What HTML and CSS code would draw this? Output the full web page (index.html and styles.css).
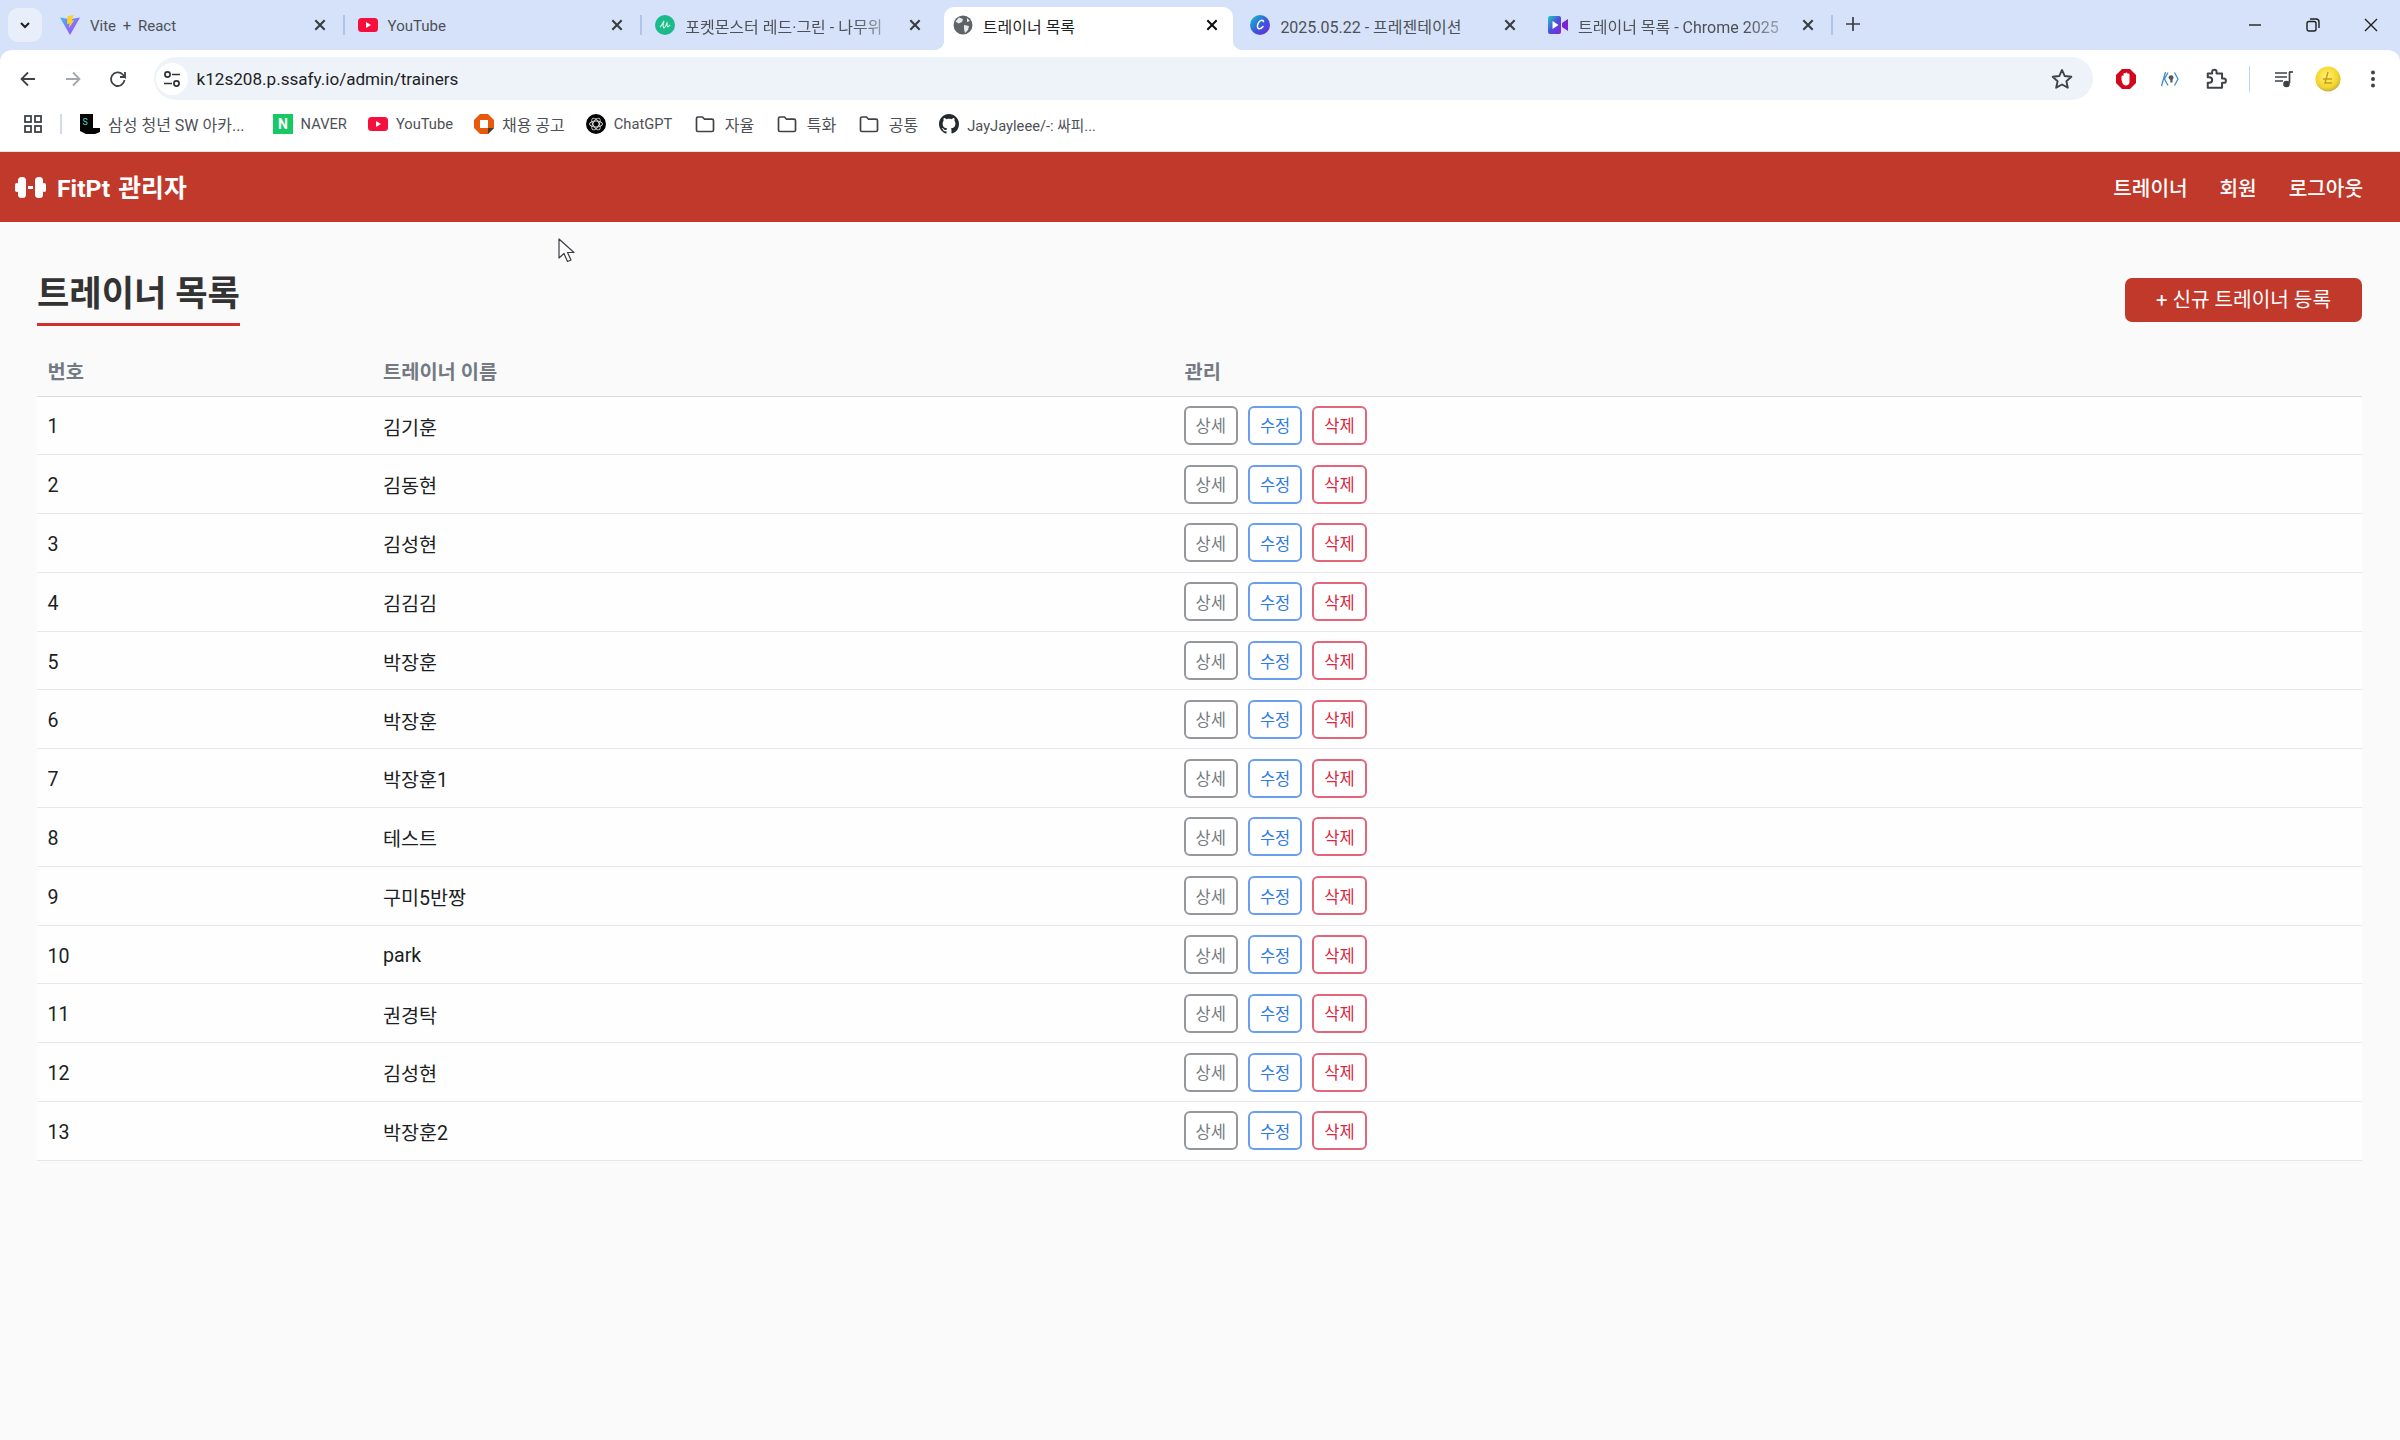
FILE: index.html
```html
<!DOCTYPE html>
<html lang="ko">
<head>
<meta charset="utf-8">
<title>트레이너 목록</title>
<link rel="stylesheet" href="styles.css">
</head>
<body>
<svg class="sprite" aria-hidden="true">
  <defs>
    <linearGradient id="g-vite" x1="0" y1="0" x2="1" y2="1"><stop offset="0" stop-color="#41b6ff"/><stop offset="1" stop-color="#bd34fe"/></linearGradient>
    <linearGradient id="g-canva" x1="0" y1="0" x2="1" y2="1"><stop offset="0" stop-color="#12c6c6"/><stop offset=".55" stop-color="#3b56e0"/><stop offset="1" stop-color="#7a1fd6"/></linearGradient>
    <linearGradient id="g-clip" x1="0" y1="0" x2="1" y2="1"><stop offset="0" stop-color="#1fd0b5"/><stop offset=".5" stop-color="#4b4fe0"/><stop offset="1" stop-color="#8a22d0"/></linearGradient>
    <radialGradient id="g-coin" cx=".45" cy=".4" r=".65"><stop offset="0" stop-color="#fff27a"/><stop offset=".7" stop-color="#f3d528"/><stop offset="1" stop-color="#b7a24a"/></radialGradient>
    <symbol id="i-yt" viewBox="0 0 20 14"><rect width="20" height="14" rx="3.5" fill="#f50f3c"/><path d="M8 4l5 3-5 3z" fill="#fff"/></symbol>
    <symbol id="i-folder" viewBox="0 0 20 18"><path d="M1.5 3.5a1.5 1.5 0 0 1 1.5-1.5h4.5l2 2.2H17a1.5 1.5 0 0 1 1.5 1.5v9.3a1.5 1.5 0 0 1-1.5 1.5H3a1.5 1.5 0 0 1-1.5-1.5z" fill="none" stroke="#3f4347" stroke-width="1.7"/></symbol>
    <symbol id="i-close" viewBox="0 0 12 12"><path d="M2 2l8 8M10 2l-8 8" fill="none" stroke="currentColor" stroke-width="1.8"/></symbol>
  </defs>
</svg>

<div class="browser">
  <div class="tabstrip">
    <div class="tab-menu"><svg class="ico-12" viewBox="0 0 12 12"><path d="M2 4l4 4 4-4" fill="none" stroke="#1f1f1f" stroke-width="2"/></svg></div>

    <div class="tab tab-sep">
      <svg class="favicon" viewBox="0 0 20 20"><path d="M0 2.5l10 1.7 10-1.7-10 17.5z" fill="url(#g-vite)"/><path d="M13.5 0L7.5 1.2 7 9l2.5-.5-.6 4.5 5.5-8-2.6.5z" fill="#ffd028"/></svg>
      <span class="tab-title tab-title-latin">Vite + React</span>
      <svg class="tab-close"><use href="#i-close"/></svg>
    </div>
    <div class="tab tab-sep">
      <svg class="favicon"><use href="#i-yt"/></svg>
      <span class="tab-title tab-title-latin">YouTube</span>
      <svg class="tab-close"><use href="#i-close"/></svg>
    </div>
    <div class="tab">
      <svg class="favicon" viewBox="0 0 20 20"><circle cx="10" cy="10" r="10" fill="#1cb98a"/><path d="M5 12c2-1 3-5 4-6-1 3-1 6 0 7 2-1 2-4 3-5 0 2 0 4 1 4l2-2" fill="none" stroke="#c9f5e4" stroke-width="1.2"/></svg>
      <span class="tab-title tab-title-fade">포켓몬스터 레드·그린 - 나무위</span>
      <svg class="tab-close"><use href="#i-close"/></svg>
    </div>
    <div class="tab tab-active">
      <svg class="favicon" viewBox="0 0 20 20"><circle cx="10" cy="10" r="9.5" fill="#5f6368"/><path d="M6 2.5l4 1.5-1 3-3.500 1.500-3-2zM11 10l5 1-1 4-3 3-1-4zM14 3l3 3-3 1z" fill="#e8eaed"/></svg>
      <span class="tab-title">트레이너 목록</span>
      <svg class="tab-close"><use href="#i-close"/></svg>
    </div>
    <div class="tab">
      <svg class="favicon" viewBox="0 0 20 20"><circle cx="10" cy="10" r="10" fill="url(#g-canva)"/><path d="M13.500 6.500c-.5-2-2.500-1.500-4 0-2 2-3 6-1 7 1.500.7 3.500-.8 4.500-2" fill="none" stroke="#fff" stroke-width="1.500" stroke-linecap="round"/></svg>
      <span class="tab-title">2025.05.22 - 프레젠테이션</span>
      <svg class="tab-close"><use href="#i-close"/></svg>
    </div>
    <div class="tab tab-sep">
      <svg class="favicon" viewBox="0 0 20 20"><path d="M0 3a2 2 0 0 1 2-2h9a2 2 0 0 1 2 2v14a2 2 0 0 1-2 2H2a2 2 0 0 1-2-2z" fill="url(#g-clip)"/><path d="M4.500 6l6 4-6 4z" fill="#fff"/><path d="M14 8l6-4v12l-6-4z" fill="#7b24cf"/></svg>
      <span class="tab-title tab-title-fade">트레이너 목록 - Chrome 2025</span>
      <svg class="tab-close"><use href="#i-close"/></svg>
    </div>

    <svg class="tab-new" viewBox="0 0 14 14"><path d="M7 0v14M0 7h14" fill="none" stroke="#3a3d40" stroke-width="1.700"/></svg>

    <div class="window-ctrl">
      <div class="win-btn"><svg class="ico-14" viewBox="0 0 14 14"><path d="M1 7h12" stroke="#1f1f1f" stroke-width="1.400"/></svg></div>
      <div class="win-btn"><svg class="ico-14" viewBox="0 0 14 14"><rect x="1" y="3.500" width="9" height="9.500" rx="2" fill="none" stroke="#1f1f1f" stroke-width="1.400"/><path d="M4 1h6a3 3 0 0 1 3 3v6" fill="none" stroke="#1f1f1f" stroke-width="1.400"/></svg></div>
      <div class="win-btn"><svg class="ico-14" viewBox="0 0 14 14"><path d="M1 1l12 12M13 1L1 13" stroke="#1f1f1f" stroke-width="1.400"/></svg></div>
    </div>
  </div>

  <div class="toolbar">
    <div class="tool-slot"><svg class="ico-20" viewBox="0 0 20 20"><path d="M17 10H4M10 3.500L3.500 10l6.500 6.500" fill="none" stroke="#3f4347" stroke-width="1.800"/></svg></div>
    <div class="tool-slot"><svg class="ico-20" viewBox="0 0 20 20"><path d="M3 10h13M10 3.500l6.500 6.500-6.500 6.500" fill="none" stroke="#a4a7ab" stroke-width="1.800"/></svg></div>
    <div class="tool-slot"><svg class="ico-20" viewBox="0 0 20 20"><path d="M16.500 11a6.800 6.800 0 1 1-1.800-5.500L17 8V3M17 8h-5" fill="none" stroke="#3f4347" stroke-width="1.800"/></svg></div>

    <div class="omnibox">
      <div class="omni-tune"><svg class="ico-20" viewBox="0 0 20 20"><circle cx="5.500" cy="5.500" r="2.600" fill="none" stroke="#2f3235" stroke-width="1.700"/><path d="M10 5.500h8M2 14.500h8" stroke="#2f3235" stroke-width="1.700"/><circle cx="14.500" cy="14.500" r="2.600" fill="none" stroke="#2f3235" stroke-width="1.700"/></svg></div>
      <span class="omni-url">k12s208.p.ssafy.io/admin/trainers</span>
      <svg class="omni-star" viewBox="0 0 20 20"><path d="M10 1.800l2.500 5.500 6 .7-4.500 4 1.300 5.900L10 15l-5.300 2.900L6 12 1.500 8l6-.7z" fill="none" stroke="#3f4347" stroke-width="1.700" stroke-linejoin="round"/></svg>
    </div>

    <div class="tool-slot"><svg class="ico-22" viewBox="0 0 22 22"><path d="M7 1h8l6 6v8l-6 6H7l-6-6V7z" fill="#d3071b"/><path d="M6.500 12V8.500a1 1 0 0 1 2 0V6a1 1 0 0 1 2 0V5.500a1 1 0 0 1 2 0V6.500a1 1 0 0 1 2 0V14c0 2-1.500 3.500-3.500 3.500S8 16.500 7.500 15z" fill="#fff"/></svg></div>
    <div class="tool-slot"><svg class="ico-22" viewBox="0 0 22 22"><path d="M5.500 4L1.500 18M8 4.500L4.500 11 8 17.500M14.500 4.500L18 11l-3.500 6.500" fill="none" stroke="#3e8fd0" stroke-width="1.300"/><path d="M9 8c1-1 3-1 4 0 .8 1 .6 3-.5 3.800v2.700h-2.200v-2.700C8.400 11 8.200 9 9 8z" fill="#55595e"/></svg></div>
    <div class="tool-slot"><svg class="ico-22" viewBox="0 0 20 20"><path d="M2.500 5h4V3.500a2 2 0 0 1 4 0V5h5v4.500H17a2 2 0 0 1 0 4h-1.500V18h-13v-4.500H4a2.500 2.500 0 0 0 0-5H2.500z" fill="none" stroke="#3f4347" stroke-width="1.800" stroke-linejoin="round"/></svg></div>
    <div class="tool-divider"></div>
    <div class="tool-slot"><svg class="ico-20" viewBox="0 0 20 20"><path d="M1 4h12M1 8h12M1 12h8" stroke="#3f4347" stroke-width="1.700"/><path d="M15.500 3v11" stroke="#3f4347" stroke-width="1.700"/><path d="M15 3h4" stroke="#3f4347" stroke-width="1.700"/><circle cx="12.500" cy="15" r="3.300" fill="#3f4347"/></svg></div>
    <div class="tool-slot"><svg class="ico-26" viewBox="0 0 26 26"><circle cx="13" cy="13" r="12.500" fill="url(#g-coin)"/><path d="M13 6l-3 11h7M8 13h9" fill="none" stroke="#c99e14" stroke-width="1.500"/></svg></div>
    <div class="tool-slot"><svg class="ico-20" viewBox="0 0 20 20"><circle cx="10" cy="3.500" r="2" fill="#3f4347"/><circle cx="10" cy="10" r="2" fill="#3f4347"/><circle cx="10" cy="16.500" r="2" fill="#3f4347"/></svg></div>
  </div>

  <div class="bookmarks">
    <svg class="bm-apps" viewBox="0 0 18 18"><g fill="none" stroke="#3f4347" stroke-width="1.800"><rect x="1" y="1" width="6" height="6"/><rect x="11" y="1" width="6" height="6"/><rect x="1" y="11" width="6" height="6"/><rect x="11" y="11" width="6" height="6"/></g></svg>
    <div class="bm-divider"></div>
    <div class="bm-list">
      <div class="bm bm-first"><svg class="favicon" viewBox="0 0 20 20"><path d="M0 0h13v14h7v4l-5 2H6l-6-3z" fill="#050505"/><text x="2.500" y="11" class="bm-s">S</text></svg><span class="bm-text">삼성 청년 SW 아카...</span></div>
      <div class="bm"><svg class="favicon" viewBox="0 0 20 20"><rect width="20" height="20" fill="#17c964"/><text x="10" y="15" class="bm-n">N</text></svg><span class="bm-text bm-latin">NAVER</span></div>
      <div class="bm"><svg class="favicon"><use href="#i-yt"/></svg><span class="bm-text bm-latin">YouTube</span></div>
      <div class="bm"><svg class="favicon" viewBox="0 0 20 20"><path d="M6 0h8l6 6v8l-6 6H6l-6-6V6z" fill="#e8590c"/><rect x="6" y="6" width="8" height="8" fill="#fff"/><path d="M14 14h6l-6 6z" fill="#4a3a30"/></svg><span class="bm-text">채용 공고</span></div>
      <div class="bm"><svg class="favicon" viewBox="0 0 20 20"><circle cx="10" cy="10" r="10" fill="#050505"/><g fill="none" stroke="#d8d8d8" stroke-width="1"><ellipse cx="10" cy="10" rx="6.500" ry="3"/><ellipse cx="10" cy="10" rx="6.500" ry="3" transform="rotate(60 10 10)"/><ellipse cx="10" cy="10" rx="6.500" ry="3" transform="rotate(120 10 10)"/></g></svg><span class="bm-text bm-latin">ChatGPT</span></div>
      <div class="bm bm-folder"><svg class="favicon"><use href="#i-folder"/></svg><span class="bm-text">자율</span></div>
      <div class="bm bm-folder"><svg class="favicon"><use href="#i-folder"/></svg><span class="bm-text">특화</span></div>
      <div class="bm bm-folder"><svg class="favicon"><use href="#i-folder"/></svg><span class="bm-text">공통</span></div>
      <div class="bm"><svg class="favicon" viewBox="0 0 16 16"><path fill="#24292f" d="M8 0C3.580 0 0 3.580 0 8c0 3.540 2.290 6.530 5.470 7.590.4.070.55-.17.55-.38 0-.19-.01-.82-.01-1.490-2.010.37-2.530-.49-2.690-.94-.09-.23-.48-.94-.82-1.130-.28-.15-.68-.52-.01-.53.63-.01 1.080.58 1.230.82.72 1.210 1.870.87 2.330.66.070-.52.28-.87.51-1.070-1.780-.2-3.640-.89-3.640-3.950 0-.87.31-1.590.82-2.150-.08-.2-.36-1.020.08-2.120 0 0 .67-.21 2.200.82.64-.18 1.320-.27 2-.27.68 0 1.360.09 2 .27 1.530-1.040 2.200-.82 2.200-.82.44 1.100.16 1.920.08 2.120.51.56.82 1.270.82 2.150 0 3.070-1.870 3.750-3.650 3.950.29.25.54.73.54 1.480 0 1.070-.01 1.930-.01 2.200 0 .21.15.46.55.38A8.013 8.013 0 0016 8c0-4.420-3.580-8-8-8z"/></svg><span class="bm-text bm-latin">JayJayleee/-: 싸피...</span></div>
    </div>
  </div>
</div>

<header class="app-header">
  <div class="brand">
    <svg class="brand-icon" viewBox="0 0 31 21"><g fill="#fff"><rect x="0" y="6" width="3.500" height="9" rx="1.700"/><rect x="3" y="0" width="8" height="21" rx="3.500"/><rect x="13" y="9" width="5" height="3"/><rect x="20" y="0" width="8" height="21" rx="3.500"/><rect x="27.500" y="6" width="3.500" height="9" rx="1.700"/></g></svg>
    <span class="brand-name">FitPt 관리자</span>
  </div>
  <nav class="app-nav">
    <a class="nav-link">트레이너</a>
    <a class="nav-link">회원</a>
    <a class="nav-link">로그아웃</a>
  </nav>
</header>

<main class="content">
  <div class="page-head">
    <h1 class="page-title">트레이너 목록</h1>
    <button class="btn-add">+ 신규 트레이너 등록</button>
  </div>

  <table class="trainers">
    <thead>
      <tr><th class="col-no">번호</th><th class="col-name">트레이너 이름</th><th>관리</th></tr>
    </thead>
    <tbody>
      <tr><td>1</td><td>김기훈</td><td><div class="actions"><button class="btn btn-view">상세</button><button class="btn btn-edit">수정</button><button class="btn btn-del">삭제</button></div></td></tr>
      <tr><td>2</td><td>김동현</td><td><div class="actions"><button class="btn btn-view">상세</button><button class="btn btn-edit">수정</button><button class="btn btn-del">삭제</button></div></td></tr>
      <tr><td>3</td><td>김성현</td><td><div class="actions"><button class="btn btn-view">상세</button><button class="btn btn-edit">수정</button><button class="btn btn-del">삭제</button></div></td></tr>
      <tr><td>4</td><td>김김김</td><td><div class="actions"><button class="btn btn-view">상세</button><button class="btn btn-edit">수정</button><button class="btn btn-del">삭제</button></div></td></tr>
      <tr><td>5</td><td>박장훈</td><td><div class="actions"><button class="btn btn-view">상세</button><button class="btn btn-edit">수정</button><button class="btn btn-del">삭제</button></div></td></tr>
      <tr><td>6</td><td>박장훈</td><td><div class="actions"><button class="btn btn-view">상세</button><button class="btn btn-edit">수정</button><button class="btn btn-del">삭제</button></div></td></tr>
      <tr><td>7</td><td>박장훈1</td><td><div class="actions"><button class="btn btn-view">상세</button><button class="btn btn-edit">수정</button><button class="btn btn-del">삭제</button></div></td></tr>
      <tr><td>8</td><td>테스트</td><td><div class="actions"><button class="btn btn-view">상세</button><button class="btn btn-edit">수정</button><button class="btn btn-del">삭제</button></div></td></tr>
      <tr><td>9</td><td>구미5반짱</td><td><div class="actions"><button class="btn btn-view">상세</button><button class="btn btn-edit">수정</button><button class="btn btn-del">삭제</button></div></td></tr>
      <tr><td>10</td><td>park</td><td><div class="actions"><button class="btn btn-view">상세</button><button class="btn btn-edit">수정</button><button class="btn btn-del">삭제</button></div></td></tr>
      <tr><td>11</td><td>권경탁</td><td><div class="actions"><button class="btn btn-view">상세</button><button class="btn btn-edit">수정</button><button class="btn btn-del">삭제</button></div></td></tr>
      <tr><td>12</td><td>김성현</td><td><div class="actions"><button class="btn btn-view">상세</button><button class="btn btn-edit">수정</button><button class="btn btn-del">삭제</button></div></td></tr>
      <tr><td>13</td><td>박장훈2</td><td><div class="actions"><button class="btn btn-view">상세</button><button class="btn btn-edit">수정</button><button class="btn btn-del">삭제</button></div></td></tr>
    </tbody>
  </table>
</main>

<svg class="cursor" viewBox="0 0 20 25"><path d="M1 1v19l5-4.500 3.500 8 3.500-1.500-3.500-7.500H16z" fill="#fff" stroke="#3a3d44" stroke-width="1.200" stroke-linejoin="round"/></svg>
</body>
</html>
```

FILE: styles.css
```css
* { box-sizing: border-box; }

html, body {
  margin: 0;
  height: 1440px;
  overflow: hidden;
}

body {
  position: relative;
  background: #fafafb;
  color: #1f2328;
  font-family: Roboto, "Noto Sans CJK KR", sans-serif;
}

.sprite { position: absolute; width: 0; height: 0; }

.ico-12 { width: 12px; height: 12px; }
.ico-14 { width: 14px; height: 14px; }
.ico-20 { width: 20px; height: 20px; }
.ico-22 { width: 22px; height: 22px; }
.ico-26 { width: 26px; height: 26px; }

.favicon { width: 20px; height: 20px; flex: none; }

/* Browser chrome */
.browser { background: #d5e2f9; }

.tabstrip {
  display: flex;
  align-items: center;
  height: 50px;
}

.tab-menu {
  display: flex;
  align-items: center;
  justify-content: center;
  flex: none;
  width: 34px;
  height: 34px;
  margin: 0 6px 0 8px;
  border-radius: 10px;
  background: #e8effb;
}

.tab {
  position: relative;
  display: flex;
  align-items: center;
  flex: none;
  gap: 10px;
  width: 297.6px;
  height: 50px;
  padding: 0 19px 0 12px;
}

.tab > * { position: relative; z-index: 1; }

.tab-title {
  flex: 1;
  min-width: 0;
  padding-top: 2px;
  white-space: nowrap;
  font-size: 16px;
  color: #4d5156;
}

.tab-title-latin {
  font-size: 15px;
  word-spacing: 3px;
}

.tab-title-fade {
  flex: none;
  width: 210px;
  margin-right: auto;
  -webkit-mask-image: linear-gradient(90deg, #000 80%, rgba(0, 0, 0, .25));
  mask-image: linear-gradient(90deg, #000 80%, rgba(0, 0, 0, .25));
}

.tab-close {
  flex: none;
  width: 14px;
  height: 14px;
  margin-bottom: 1px;
  color: #3a3d40;
}

.tab-sep::after {
  content: "";
  position: absolute;
  top: 15px;
  right: 1px;
  width: 2px;
  height: 20px;
  background: #aec4e8;
}

.tab-active::before {
  content: "";
  position: absolute;
  top: 7px;
  right: 5px;
  bottom: 0;
  left: 3px;
  border-radius: 10px 10px 0 0;
  background: #fff;
}

.tab-active::after {
  content: "";
  position: absolute;
  right: -5px;
  bottom: 0;
  left: -7px;
  height: 10px;
  background:
    radial-gradient(circle at 0 0, transparent 10px, #fff 10.5px) left / 10px 10px no-repeat,
    radial-gradient(circle at 100% 0, transparent 10px, #fff 10.5px) right / 10px 10px no-repeat;
}

.tab-active .tab-title { color: #1f1f1f; }
.tab-active .tab-close { color: #111; }

.tab-new {
  flex: none;
  width: 14px;
  height: 14px;
  margin: 0 0 2px 12px;
}

.window-ctrl {
  display: flex;
  margin-left: auto;
}

.win-btn {
  display: flex;
  align-items: center;
  justify-content: center;
  width: 58px;
  height: 48px;
}

.toolbar {
  display: flex;
  align-items: center;
  height: 50px;
  padding: 7px 4.5px 0 5.75px;
  border-radius: 12px 12px 0 0;
  background: #fff;
}

.tool-slot {
  display: flex;
  align-items: center;
  justify-content: center;
  flex: none;
  width: 44.75px;
  height: 43px;
}

.omnibox {
  display: flex;
  align-items: center;
  flex: 1;
  min-width: 0;
  height: 43px;
  margin: 0 11px 0 13.5px;
  padding: 0 20px 0 2px;
  border-radius: 22px;
  background: #eef2f9;
}

.omni-tune {
  display: flex;
  align-items: center;
  justify-content: center;
  flex: none;
  width: 32px;
  height: 32px;
  border-radius: 50%;
  background: #fff;
}

.omni-url {
  flex: 1;
  margin-left: 9px;
  font-size: 17.1px;
  color: #1f1f1f;
}

.omni-star { flex: none; width: 22px; height: 22px; }

.tool-divider {
  flex: none;
  width: 1px;
  height: 26px;
  margin: 0 11px;
  background: #c5d3ea;
}

.bookmarks {
  display: flex;
  align-items: center;
  height: 52px;
  padding: 0 0 3px 24px;
  border-bottom: 1px solid #e3e3e6;
  background: #fff;
}

.bm-apps { flex: none; width: 18px; height: 18px; }

.bm-divider {
  flex: none;
  width: 2px;
  height: 20px;
  margin: 0 18px 0 18px;
  background: #d3dcec;
}

.bm-list {
  display: flex;
  align-items: center;
  gap: 21px;
}

.bm {
  display: flex;
  align-items: center;
  gap: 8px;
}

.bm-first { margin-right: 7px; }

.bm-folder {
  gap: 10px;
  margin-left: 1.5px;
}

.bm-text {
  font-size: 16px;
  white-space: nowrap;
  color: #4d5156;
}

.bm-latin { font-size: 14.7px; }

.bm-s { font-size: 9px; fill: #4fd0c8; }
.bm-n { font-size: 14px; font-weight: 700; fill: #fff; text-anchor: middle; }

/* App header */
.app-header {
  display: flex;
  align-items: center;
  justify-content: space-between;
  height: 70px;
  padding: 0 37px 0 15px;
  background: #c0392b;
  color: #fff;
}

.brand {
  display: flex;
  align-items: center;
  gap: 11px;
}

.brand-icon { width: 31px; height: 21px; }

.brand-name {
  padding-bottom: 2px;
  font-size: 24.8px;
  font-weight: 700;
  word-spacing: 2px;
}

.app-nav {
  display: flex;
  gap: 32px;
}

.nav-link {
  font-size: 20.2px;
  font-weight: 500;
  color: #fff;
}

/* Content */
.content { padding: 51px 38px 0 37px; }

.page-head {
  display: flex;
  align-items: center;
  justify-content: space-between;
  margin-bottom: 20px;
}

.page-title {
  margin: 0;
  padding-bottom: 7px;
  border-bottom: 3px solid #d32f2f;
  font-size: 35.2px;
  font-weight: 700;
  line-height: 43px;
  color: #333;
}

.btn-add {
  height: 44px;
  padding: 0 31px 2px;
  border: 0;
  border-radius: 7px;
  background: #c0392b;
  color: #fff;
  font-family: inherit;
  font-size: 20.2px;
}

.trainers {
  width: 100%;
  border-collapse: collapse;
  table-layout: fixed;
}

.trainers th {
  height: 50px;
  padding: 0 10.5px;
  border-bottom: 1px solid #dcdce2;
  font-size: 19.8px;
  font-weight: 700;
  text-align: left;
  color: #737a82;
}

.trainers .col-no { width: 335.5px; }
.trainers .col-name { width: 801.5px; }

.trainers td {
  height: 58.8px;
  padding: 1.5px 10.5px 0;
  border-bottom: 1px solid #e6e6ec;
  background: #fefefe;
  font-size: 19.6px;
  color: #1b1f23;
}

.trainers td:first-child { padding-top: 3px; }

.actions {
  display: flex;
  gap: 10px;
  margin: -1.5px 0 0 -1px;
}

.btn {
  height: 39px;
  padding: 0 10px;
  border: 2px solid;
  border-radius: 6px;
  background: #fff;
  font-family: inherit;
  font-size: 16.5px;
}

.btn-view { border-color: #94989d; color: #777c82; }
.btn-edit { border-color: #6a9ef0; color: #2f7be5; }
.btn-del { border-color: #e4647a; color: #d8273f; }

.cursor {
  position: absolute;
  top: 238px;
  left: 558px;
  width: 20px;
  height: 25px;
}
```
